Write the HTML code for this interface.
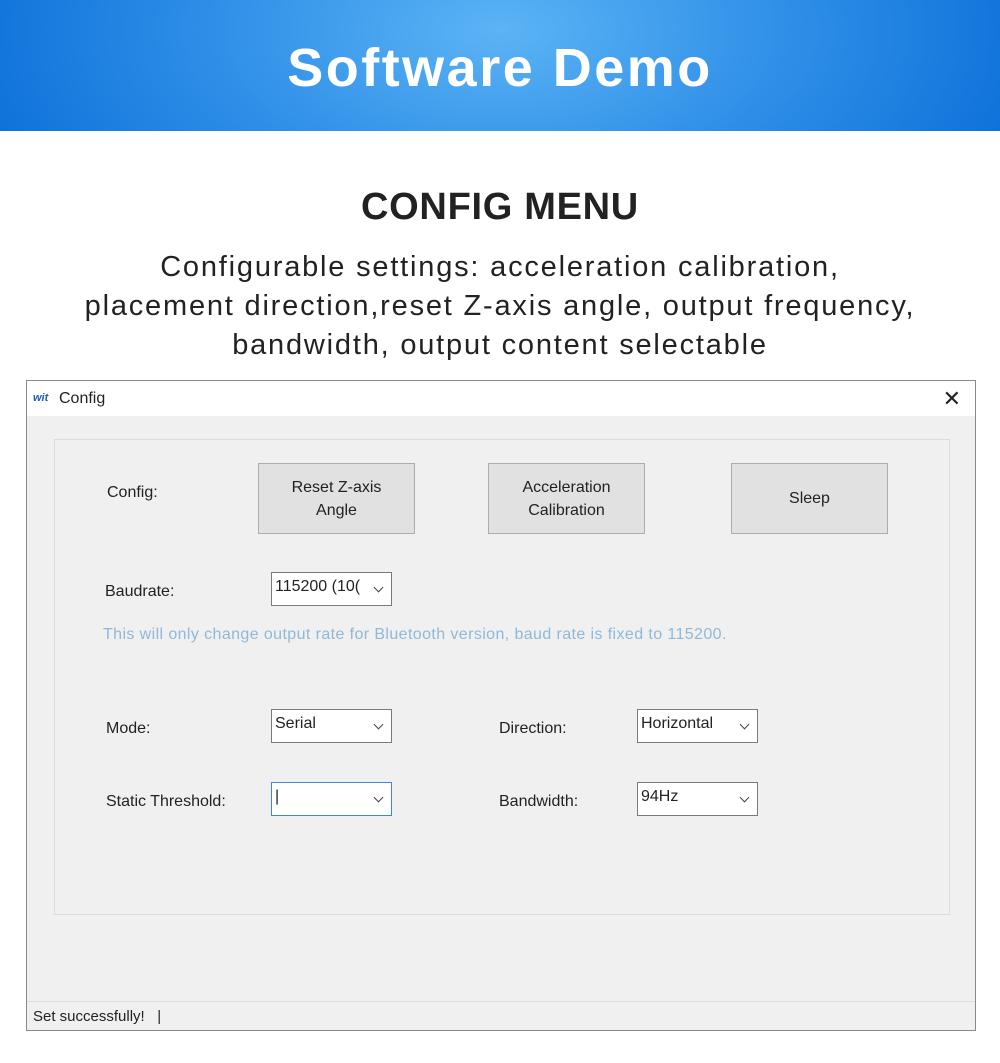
<!DOCTYPE html>
<html><head><style>
*{margin:0;padding:0;box-sizing:border-box}
body{width:1000px;height:1063px;background:#fff;font-family:"Liberation Sans","DejaVu Sans",sans-serif;position:relative;overflow:hidden;color:#222}
.hdr{position:absolute;left:0;top:0;width:1000px;height:131px;background:radial-gradient(ellipse 560px 300px at 500px 30px,#5cb4f5 0%,#3090e8 50%,#0b6fd8 100%);color:#fff;text-align:center;font-size:54px;font-weight:bold;line-height:136px;letter-spacing:2.5px}
.h2{position:absolute;top:186px;width:1000px;text-align:center;font-size:38px;font-weight:bold;color:#222;letter-spacing:0.7px}
.desc{position:absolute;top:248px;width:1000px;text-align:center;font-size:29px;line-height:39px;color:#222;letter-spacing:1.8px}
.win{position:absolute;left:26px;top:380px;width:950px;height:651px;border:1px solid #8a8a8a;background:#f0f0f0}
.tb{position:absolute;left:0;top:0;width:948px;height:35px;background:#fff;font-size:16px;line-height:35px;padding-left:32px}
.grp{position:absolute;left:27px;top:58px;width:896px;height:476px;border:1px solid #dcdcdc}
.a{position:absolute;font-size:16px;color:#222}
.btn{position:absolute;width:157px;height:71px;background:#e1e1e1;border:1px solid #adadad;font-size:16px;text-align:center;display:flex;align-items:center;justify-content:center;line-height:23px}
.cb{position:absolute;width:121px;height:34px;background:#fff;border:1px solid #7a7a7a;font-size:16px;padding:5px 0 0 3px}
.cb:after{content:"";position:absolute;right:9px;top:11px;width:6px;height:6px;border-right:1px solid #444;border-bottom:1px solid #444;transform:rotate(45deg)}
</style></head><body>
<div class="hdr">Software Demo</div>
<div class="h2">CONFIG MENU</div>
<div class="desc">Configurable settings: acceleration calibration,<br>placement direction,reset Z-axis angle, output frequency,<br>bandwidth, output content selectable</div>
<div class="win">
<div class="tb"><span style="position:absolute;left:6px;top:0;color:#1a5fb4;font-style:italic;font-weight:bold;font-size:11px">wit</span>Config<span style="position:absolute;right:14px;top:0;font-size:22px;font-weight:300">✕</span></div>
<div class="grp"></div>
<div class="a" style="left:80px;top:103px">Config:</div>
<div class="btn" style="left:231px;top:82px">Reset Z-axis<br>Angle</div>
<div class="btn" style="left:461px;top:82px">Acceleration<br>Calibration</div>
<div class="btn" style="left:704px;top:82px">Sleep</div>
<div class="a" style="left:78px;top:202px">Baudrate:</div>
<div class="cb" style="left:244px;top:191px">115200 (10(</div>
<div class="a" style="left:76px;top:245px;color:#8fb8da;letter-spacing:0.4px">This will only change output rate for Bluetooth version, baud rate is fixed to 115200.</div>
<div class="a" style="left:79px;top:339px">Mode:</div>
<div class="cb" style="left:244px;top:328px">Serial</div>
<div class="a" style="left:472px;top:339px">Direction:</div>
<div class="cb" style="left:610px;top:328px">Horizontal</div>
<div class="a" style="left:79px;top:412px">Static Threshold:</div>
<div class="cb" style="left:244px;top:401px;border-color:#3c8ad6">|</div>
<div class="a" style="left:472px;top:412px">Bandwidth:</div>
<div class="cb" style="left:610px;top:401px">94Hz</div>
<div style="position:absolute;left:0;top:620px;width:948px;border-top:1px solid #dcdcdc"></div>
<div class="a" style="left:6px;top:627px;font-size:15px">Set successfully! &nbsp;&nbsp;|</div>
</div>
</body></html>
